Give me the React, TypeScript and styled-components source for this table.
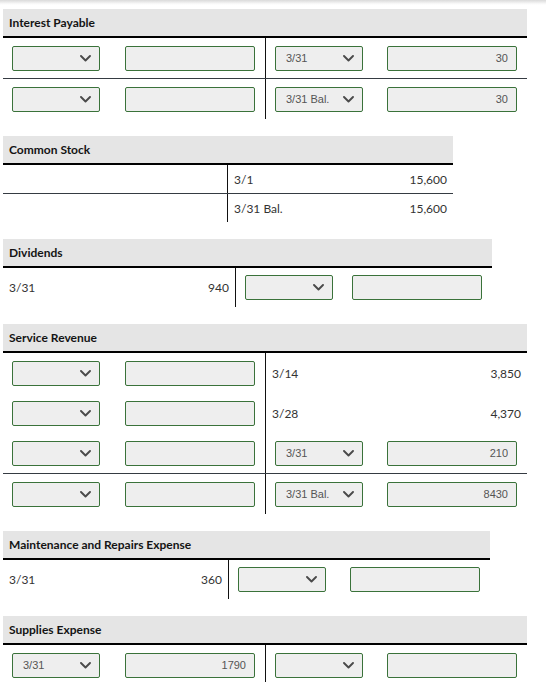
import React from 'react';
import styled, { createGlobalStyle } from 'styled-components';

const GlobalStyle = createGlobalStyle`
    html, body {
        margin: 0;
        padding: 0;
        background: #ffffff;
    }
    body {
        font-family: Lato, 'Liberation Sans', sans-serif;
    }
`;

const Page = styled.div`
    width: 546px;
    padding-bottom: 20px;
`;

const Shade = styled.div`
    height: 5px;
    margin-bottom: 4px;
    background: linear-gradient(to bottom, #dadada, #f7f7f7 70%, #ffffff);
`;

const Ledger = styled.div`
    padding-left: 3px;
    display: flex;
    flex-direction: column;
    gap: 17px;
`;

const Account = styled.section<{ $width: number }>`
    width: ${({ $width }) => $width}px;
`;

const Head = styled.div`
    height: 27px;
    display: flex;
    align-items: center;
    padding-left: 6px;
    background: #e5e5e5;
    border-bottom: 2px solid #000;
    font-family: Lato, sans-serif;
    font-size: 12px;
    font-weight: bold;
    color: #141414;
`;

const Row = styled.div<{ $split: number; $height: number; $line?: boolean }>`
    display: grid;
    grid-template-columns: ${({ $split }) => $split}px 1fr;
    height: ${({ $height }) => $height}px;
    border-bottom: ${({ $line }) => ($line ? '1px solid #353b42' : 'none')};
`;

const Side = styled.div<{ $left?: boolean }>`
    display: flex;
    align-items: center;
    justify-content: space-between;
    border-right: ${({ $left }) => ($left ? '1px solid #111' : 'none')};
`;

const TextSide = styled(Side)`
    padding: 0 6px 0 6px;
    font-family: Lato, sans-serif;
    font-size: 12px;
    color: #333;
`;

const EntrySide = styled(Side)`
    padding: 0 10px 0 9px;
`;

const SelectWrap = styled.span`
    position: relative;
    display: inline-block;
    width: 88px;
    height: 25px;
`;

const Select = styled.select`
    appearance: none;
    -webkit-appearance: none;
    width: 100%;
    height: 100%;
    box-sizing: border-box;
    margin: 0;
    padding: 0 24px 0 10px;
    background: #eeeeee;
    border: 1px solid #3a723a;
    border-radius: 2px;
    font-family: 'Liberation Sans', Arial, sans-serif;
    font-size: 11px;
    color: #555;
    outline: none;
`;

const Chevron = styled.svg`
    position: absolute;
    right: 9px;
    top: 9px;
    pointer-events: none;
`;

const Amount = styled.input`
    width: 130px;
    height: 25px;
    box-sizing: border-box;
    margin: 0;
    padding: 0 8px;
    background: #eeeeee;
    border: 1px solid #3a723a;
    border-radius: 2px;
    text-align: right;
    font-family: 'Liberation Sans', Arial, sans-serif;
    font-size: 11px;
    color: #555;
    outline: none;
`;

type Cell =
    | { kind: 'text'; date: string; amount: string }
    | { kind: 'entry'; date?: string; amount?: string }
    | { kind: 'empty' };

type LedgerRow = { left: Cell; right: Cell; line?: boolean };

type AccountData = {
    title: string;
    width: number;
    split: number;
    rowHeight: number;
    rows: LedgerRow[];
};

const dates = ['3/1', '3/14', '3/28', '3/31', '3/31 Bal.'];

const entry = (date?: string, amount?: string): Cell => ({ kind: 'entry', date, amount });
const text = (date: string, amount: string): Cell => ({ kind: 'text', date, amount });
const empty: Cell = { kind: 'empty' };

const accounts: AccountData[] = [
    {
        title: 'Interest Payable',
        width: 524,
        split: 263,
        rowHeight: 40,
        rows: [
            { left: entry(), right: entry('3/31', '30'), line: true },
            { left: entry(), right: entry('3/31 Bal.', '30') },
        ],
    },
    {
        title: 'Common Stock',
        width: 450,
        split: 225,
        rowHeight: 28,
        rows: [
            { left: empty, right: text('3/1', '15,600'), line: true },
            { left: empty, right: text('3/31 Bal.', '15,600') },
        ],
    },
    {
        title: 'Dividends',
        width: 489,
        split: 233,
        rowHeight: 39,
        rows: [{ left: text('3/31', '940'), right: entry() }],
    },
    {
        title: 'Service Revenue',
        width: 524,
        split: 263,
        rowHeight: 40,
        rows: [
            { left: entry(), right: text('3/14', '3,850') },
            { left: entry(), right: text('3/28', '4,370') },
            { left: entry(), right: entry('3/31', '210'), line: true },
            { left: entry(), right: entry('3/31 Bal.', '8430') },
        ],
    },
    {
        title: 'Maintenance and Repairs Expense',
        width: 487,
        split: 226,
        rowHeight: 39,
        rows: [{ left: text('3/31', '360'), right: entry() }],
    },
    {
        title: 'Supplies Expense',
        width: 524,
        split: 263,
        rowHeight: 40,
        rows: [{ left: entry('3/31', '1790'), right: entry() }],
    },
];

const DateSelect: React.FC<{ value?: string }> = ({ value }) => (
    <SelectWrap>
        <Select defaultValue={value ?? ''}>
            <option value=''></option>
            {dates.map((d) => (
                <option key={d} value={d}>
                    {d}
                </option>
            ))}
        </Select>
        <Chevron width='11' height='7' viewBox='0 0 11 7'>
            <polyline
                points='1,1 5.5,5.5 10,1'
                fill='none'
                stroke='#4a4a4a'
                strokeWidth='1.9'
                strokeLinecap='round'
                strokeLinejoin='round'
            />
        </Chevron>
    </SelectWrap>
);

const renderCell = (cell: Cell, left: boolean) => {
    if (cell.kind === 'text') {
        return (
            <TextSide $left={left}>
                <span>{cell.date}</span>
                <span>{cell.amount}</span>
            </TextSide>
        );
    }
    if (cell.kind === 'entry') {
        return (
            <EntrySide $left={left}>
                <DateSelect value={cell.date} />
                <Amount type='text' defaultValue={cell.amount ?? ''} />
            </EntrySide>
        );
    }
    return <Side $left={left} />;
};

export default function App() {
    return (
        <Page>
            <GlobalStyle />
            <Shade />
            <Ledger>
                {accounts.map((account) => (
                    <Account key={account.title} $width={account.width}>
                        <Head>{account.title}</Head>
                        {account.rows.map((row, i) => (
                            <Row
                                key={i}
                                $split={account.split}
                                $height={account.rowHeight}
                                $line={row.line}
                            >
                                {renderCell(row.left, true)}
                                {renderCell(row.right, false)}
                            </Row>
                        ))}
                    </Account>
                ))}
            </Ledger>
        </Page>
    );
}
